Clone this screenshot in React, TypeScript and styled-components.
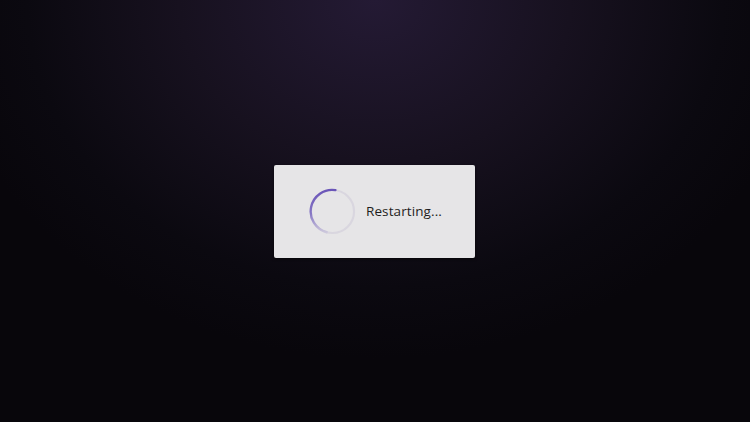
import styled, { createGlobalStyle } from "styled-components";

const GlobalStyle = createGlobalStyle`
  html, body {
    margin: 0;
    padding: 0;
    height: 100%;
  }
  body {
    font-family: "Open Sans", "Liberation Sans", sans-serif;
  }
  #root {
    height: 100%;
  }
`;

const Screen = styled.div`
  width: 750px;
  height: 422px;
  display: flex;
  align-items: center;
  justify-content: center;
  background:
    radial-gradient(ellipse 58% 85% at 50% 0%, #241a34 0%, #17111f 45%, #0b0910 80%, #08060b 100%);
  overflow: hidden;
`;

const Dialog = styled.div`
  width: 201px;
  height: 93px;
  margin-left: -1px;
  background: #e6e5e7;
  border-radius: 2px;
  box-shadow: 0 1px 3px rgba(0, 0, 0, 0.6);
  display: flex;
  align-items: center;
  padding-left: 35px;
  box-sizing: border-box;
  gap: 10px;
`;

const Spinner = styled.svg`
  width: 47px;
  height: 47px;
  flex-shrink: 0;
`;

const Label = styled.span`
  font-size: 13.5px;
  color: #1f1e21;
  letter-spacing: 0.1px;
`;

export default function App() {
  return (
    <>
      <GlobalStyle />
      <Screen>
        <Dialog>
          <Spinner viewBox="0 0 48 48">
            <defs>
              <linearGradient id="arc" x1="0" y1="0" x2="0" y2="1">
                <stop offset="0%" stopColor="#6a55b8" />
                <stop offset="55%" stopColor="#8575c4" />
                <stop offset="100%" stopColor="#cdc8dc" />
              </linearGradient>
            </defs>
            <circle cx="24" cy="24" r="22" fill="none" stroke="#d9d6df" strokeWidth="2.2" />
            <path
              d="M27 2.2 A22 22 0 0 0 18 45.2"
              fill="none"
              stroke="url(#arc)"
              strokeWidth="2.4"
              strokeLinecap="round"
            />
          </Spinner>
          <Label>Restarting...</Label>
        </Dialog>
      </Screen>
    </>
  );
}
